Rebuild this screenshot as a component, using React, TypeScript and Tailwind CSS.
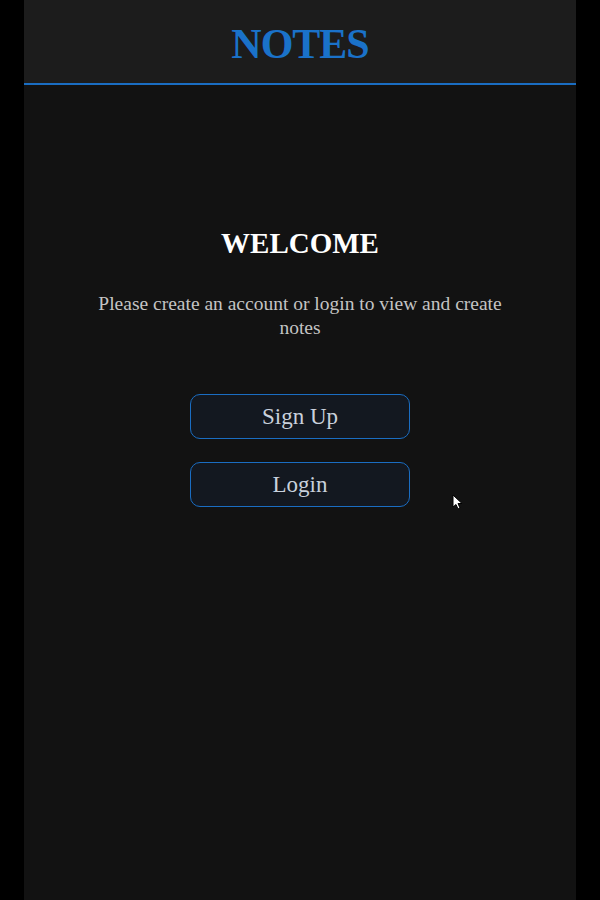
export default function App() {
  return (
    <div
      className="min-h-[900px] w-full bg-black flex justify-center"
      style={{ fontFamily: '"Liberation Serif", "DejaVu Serif", serif' }}
    >
      <div className="relative w-[552px] min-h-[900px] bg-[#121212] flex flex-col">
        <header className="h-[85px] bg-[#1c1c1c] border-b-2 border-[#1a6dc2] flex items-center justify-center">
          <h1 className="text-[42px] font-bold text-[#1a72c9] tracking-[-1px] leading-none pt-[4px]">
            NOTES
          </h1>
        </header>
        <main className="flex flex-col items-center pt-[144px]">
          <h2 className="text-[29px] font-bold text-white leading-none">WELCOME</h2>
          <p className="mt-[34px] w-[410px] text-center text-[19.5px] leading-[24px] text-[#c4c4c4]">
            Please create an account or login to view and create notes
          </p>
          <div className="mt-[54px] flex flex-col gap-[23px]">
            <button className="w-[220px] h-[45px] rounded-[10px] border border-[#1a6dc2] bg-[#131820] text-[23px] text-[#c9d1dc] pt-[2px]">
              Sign Up
            </button>
            <button className="w-[220px] h-[45px] rounded-[10px] border border-[#1a6dc2] bg-[#131820] text-[23px] text-[#c9d1dc] pt-[2px]">
              Login
            </button>
          </div>
        </main>
        <svg
          className="absolute left-[428px] top-[494px]"
          width="12"
          height="18"
          viewBox="0 0 12 18"
        >
          <path d="M1 1 L1 13 L4 10.5 L6 15 L8 14 L6 9.5 L10 9.5 Z" fill="#fff" stroke="#000" strokeWidth="1" />
        </svg>
      </div>
    </div>
  );
}
